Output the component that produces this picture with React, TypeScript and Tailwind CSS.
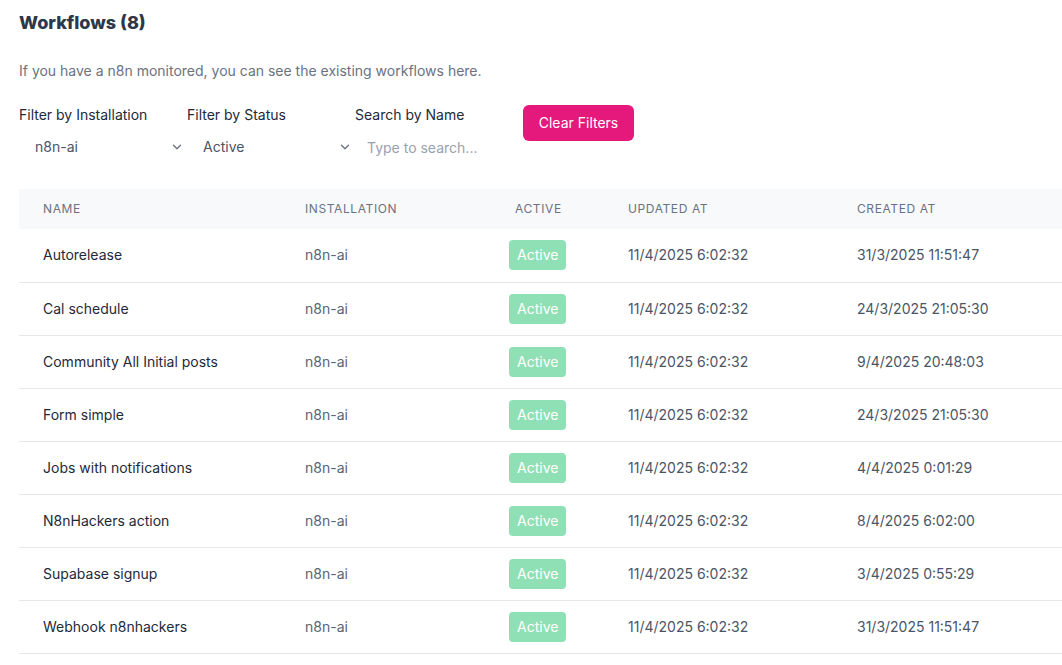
import { ChevronDown } from 'lucide-react'

interface Workflow {
  name: string
  installation: string
  updated: string
  created: string
}

const workflows: Workflow[] = [
  { name: 'Autorelease', installation: 'n8n-ai', updated: '11/4/2025 6:02:32', created: '31/3/2025 11:51:47' },
  { name: 'Cal schedule', installation: 'n8n-ai', updated: '11/4/2025 6:02:32', created: '24/3/2025 21:05:30' },
  { name: 'Community All Initial posts', installation: 'n8n-ai', updated: '11/4/2025 6:02:32', created: '9/4/2025 20:48:03' },
  { name: 'Form simple', installation: 'n8n-ai', updated: '11/4/2025 6:02:32', created: '24/3/2025 21:05:30' },
  { name: 'Jobs with notifications', installation: 'n8n-ai', updated: '11/4/2025 6:02:32', created: '4/4/2025 0:01:29' },
  { name: 'N8nHackers action', installation: 'n8n-ai', updated: '11/4/2025 6:02:32', created: '8/4/2025 6:02:00' },
  { name: 'Supabase signup', installation: 'n8n-ai', updated: '11/4/2025 6:02:32', created: '3/4/2025 0:55:29' },
  { name: 'Webhook n8nhackers', installation: 'n8n-ai', updated: '11/4/2025 6:02:32', created: '31/3/2025 11:51:47' },
]

function Select({ value }: { value: string }) {
  return (
    <div className="flex items-center h-8 pl-4 pr-[3px] text-sm text-gray-600">
      <span className="flex-1">{value}</span>
      <ChevronDown size={14} strokeWidth={2.2} className="text-gray-500" />
    </div>
  )
}

export default function App() {
  return (
    <div
      className="min-h-screen bg-white text-gray-800 pl-[19px] overflow-hidden"
      style={{ fontFamily: 'Inter, "Noto Sans", sans-serif' }}
    >
      <h1 className="pt-[9px] text-lg leading-7 font-extrabold text-[#2d3748]">Workflows (8)</h1>
      <p className="mt-[24px] text-sm leading-5 text-gray-500">
        If you have a n8n monitored, you can see the existing workflows here.
      </p>

      <div className="mt-[24px] flex items-start">
        <div className="w-[168px]">
          <div className="text-sm leading-5 text-gray-800">Filter by Installation</div>
          <div className="mt-[6px]">
            <Select value="n8n-ai" />
          </div>
        </div>
        <div className="w-[168px]">
          <div className="text-sm leading-5 text-gray-800">Filter by Status</div>
          <div className="mt-[6px]">
            <Select value="Active" />
          </div>
        </div>
        <div className="w-[168px]">
          <div className="text-sm leading-5 text-gray-800">Search by Name</div>
          <input
            className="mt-[6px] h-8 w-[152px] pl-3 text-sm text-gray-700 placeholder:text-gray-400 outline-none"
            placeholder="Type to search..."
          />
        </div>
        <button className="h-9 w-[111px] rounded-md bg-[#e5197b] text-sm text-white">
          Clear Filters
        </button>
      </div>

      <table className="mt-[26px] w-[1100px] table-fixed border-collapse text-sm">
        <colgroup>
          <col className="w-[262px]" />
          <col className="w-[204px]" />
          <col className="w-[119px]" />
          <col className="w-[229px]" />
          <col />
        </colgroup>
        <thead>
          <tr className="h-10 bg-[#f8f9fb] text-left text-xs uppercase tracking-wider text-gray-500">
            <th className="pl-6 font-normal">Name</th>
            <th className="pl-6 font-normal">Installation</th>
            <th className="pl-[30px] font-normal">Active</th>
            <th className="pl-6 font-normal">Updated At</th>
            <th className="pl-6 font-normal">Created At</th>
          </tr>
        </thead>
        <tbody>
          {workflows.map(w => (
            <tr key={w.name + w.created} className="h-[53px] border-b border-gray-200">
              <td className="pl-6 text-gray-800">{w.name}</td>
              <td className="pl-6 text-[#5a6478]">{w.installation}</td>
              <td className="pl-6">
                <span className="inline-flex h-[30px] items-center rounded bg-[#8fe0b5] px-2 text-white">Active</span>
              </td>
              <td className="pl-6 text-gray-600">{w.updated}</td>
              <td className="pl-6 text-gray-600">{w.created}</td>
            </tr>
          ))}
        </tbody>
      </table>
    </div>
  )
}
